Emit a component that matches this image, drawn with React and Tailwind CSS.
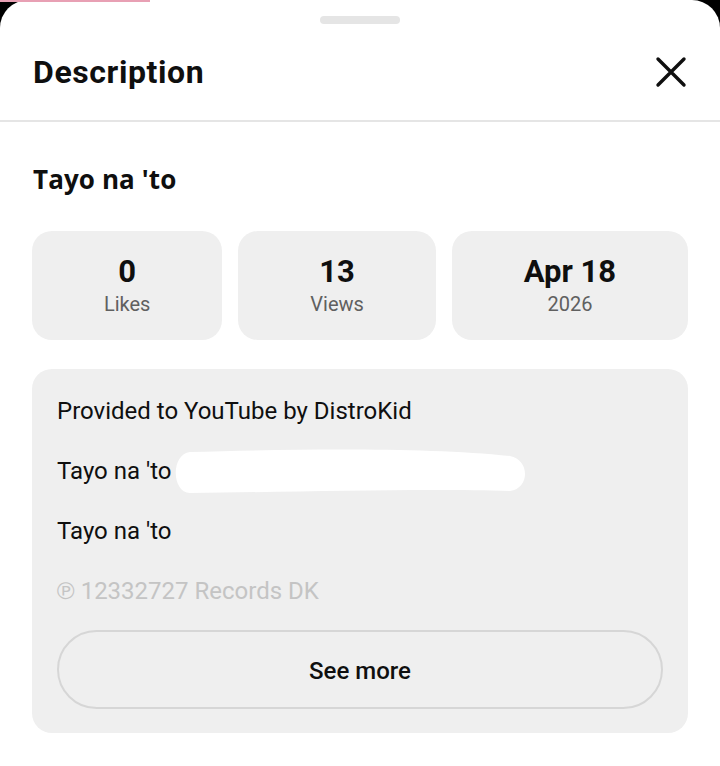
// Bottom sheet showing a video's description, likes/views/date stats and a "See more" button.
const stats = [
  { value: '0', label: 'Likes' },
  { value: '13', label: 'Views' },
  { value: 'Apr 18', label: '2026' },
]

function Redacted() {
  return (
    <svg width="354" height="46" viewBox="0 0 354 46" className="-my-[8px] ml-[3px] shrink-0">
      <path
        d="M16 4 C120 1 250 -1 336 8 C356 12 356 40 336 43 C250 40 120 44 16 45 C-3 44 -3 6 16 4 Z"
        fill="#ffffff"
      />
    </svg>
  )
}

export default function App() {
  return (
    <div className="relative min-h-[766px] bg-black font-['Roboto',sans-serif] text-[#0f0f0f]">
      <div className="absolute left-0 top-0 h-[2px] w-[150px] bg-[#e8a0b4]" />
      <div className="min-h-[766px] rounded-t-[28px] bg-white">
        <div className="flex justify-center pt-4">
          <div className="h-2 w-20 rounded-full bg-[#e5e5e5]" />
        </div>

        <div className="flex h-[96px] items-center justify-between pl-[33px] pr-[33px]">
          <h1 className="text-[32px] font-bold leading-none tracking-[0.6px]">Description</h1>
          <svg width="32" height="32" viewBox="0 0 32 32" fill="none" stroke="#0f0f0f" strokeWidth="3.4" strokeLinecap="round">
            <path d="M3 3 L29 29 M29 3 L3 29" />
          </svg>
        </div>
        <div className="h-[2px] bg-[#e5e5e5]" />

        <div className="px-8">
          <h2 className="mt-[41px] pl-[1px] font-['Open_Sans',sans-serif] text-[26px] font-bold leading-[32px] tracking-[0.1px]">
            Tayo na 'to
          </h2>

          <div className="mt-[36px] flex gap-4">
            {stats.map(s => (
              <div
                key={s.label}
                className="flex h-[109px] flex-auto flex-col items-center justify-center rounded-[20px] bg-[#efefef]"
              >
                <div className="text-[31px] font-bold leading-[34px]">{s.value}</div>
                <div className="mt-[2px] text-[20px] leading-[26px] text-[#606060]">{s.label}</div>
              </div>
            ))}
          </div>

          <div className="mt-[29px] rounded-[20px] bg-[#efefef] px-[25px] pb-6 pt-[27px] text-[24px] leading-[30px]">
            <div className="flex flex-col gap-[30px]">
              <p>Provided to YouTube by DistroKid</p>
              <div className="flex items-center">
                <span>Tayo na 'to</span>
                <Redacted />
              </div>
              <p>Tayo na 'to</p>
              <p className="text-[#c4c4c4]">℗ 12332727 Records DK</p>
            </div>
            <button className="mt-6 flex h-[79px] w-full items-center justify-center rounded-full border-2 border-[#d6d6d6] pt-[3px] text-[24px] font-medium">
              See more
            </button>
          </div>
        </div>
      </div>
    </div>
  )
}
